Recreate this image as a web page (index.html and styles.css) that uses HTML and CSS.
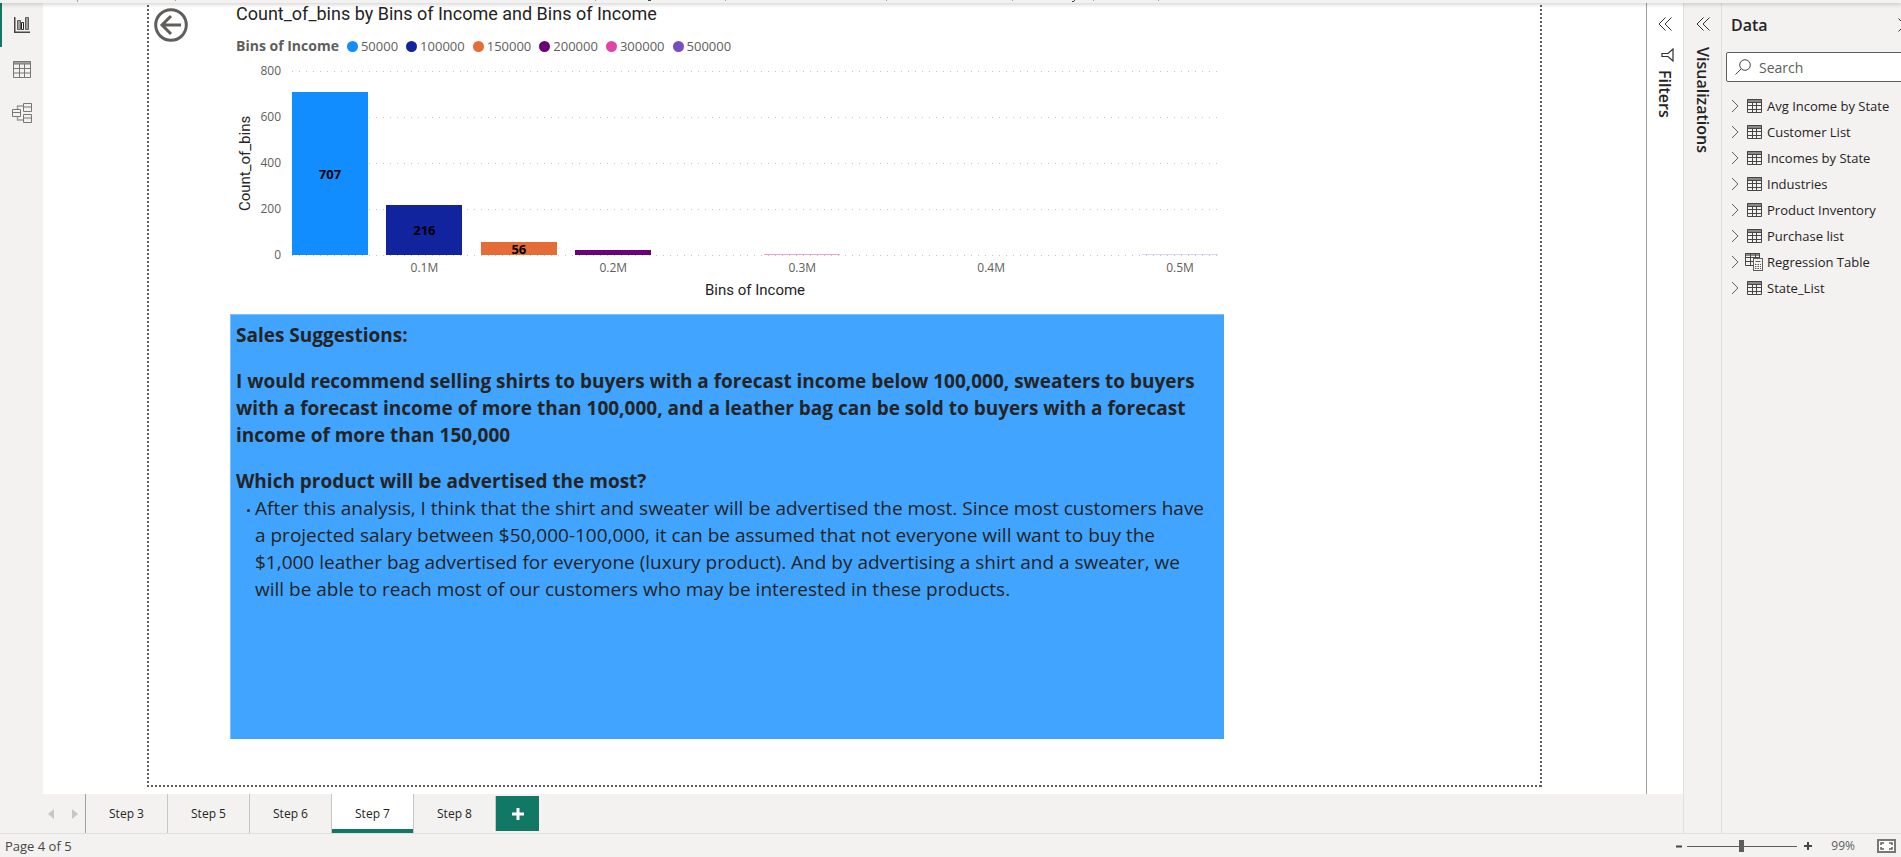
FILE: index.html
```html
<!DOCTYPE html>
<html lang="en">
<head>
<meta charset="utf-8">
<title>Report - Step 7</title>
<link rel="stylesheet" href="styles.css">
</head>
<body>
<svg class="defs" aria-hidden="true">
  <symbol id="table" viewBox="0 0 15 14">
    <rect x="0" y="0" width="15" height="3" fill="#8a8886"/>
    <path d="M.5.5h14v13H.5zM0 3.500h15M0 6.500h15M0 10.500h15M5.500 3v10M9.500 3v10" fill="none" stroke="#484644"/>
  </symbol>
  <symbol id="calc-table" viewBox="0 0 19 18">
    <rect x="0" y="0" width="15" height="3" fill="#8a8886"/>
    <path d="M.5.500h14v12H.5zM0 4.500h15M0 8.500h8M5.500 1v11M10.500 1v5" fill="none" stroke="#484644"/>
    <rect x="8.500" y="5.500" width="9" height="12" fill="#f3f2f1" stroke="#605e5c"/>
    <path d="M10.500 8.500h5M10 11.500h1.500m1 0H14m1 0h1M10 13.500h1.500m1 0H14m1 0h1M10 15.500h1.500m1 0H14m1 0h1" stroke="#605e5c"/>
  </symbol>
  <symbol id="chevron" viewBox="0 0 8 14"><path d="M1 1l6 6-6 6" fill="none" stroke="#605e5c"/></symbol>
  <symbol id="double" viewBox="0 0 14 14"><path d="M7.500.5L1 7l6.500 6.500M13.500.5L7 7l6.500 6.500" fill="none" stroke="#323130"/></symbol>
</svg>
<div class="app">
  <header class="ribbon">
    <svg width="1200" height="3" aria-hidden="true">
      <path d="M77.500 0v2M175.500 0v1M595.500 0v1M725.500 0v1M886.500 0v1M1012.500 0v1M1093.500 0v1M1158.500 0v1" stroke="#a19f9d"/>
      <path d="M648 .5h3M1072 1.500h2M1074 .5h1" stroke="#484644"/>
    </svg>
  </header>
  <div class="body">
    <nav class="rail" aria-label="Views">
      <button class="view current" aria-label="Report view">
        <svg width="16" height="16" viewBox="0 0 16 16"><path d="M.75 0v15.250H16" fill="none" stroke="#484644" stroke-width="1.500"/><path d="M3.500 3.500h3v9h-3zM11.500.5h3v12h-3z" fill="#a19f9d" stroke="#605e5c"/><path d="M7.500 5.500h2v7h-2z" fill="#fff" stroke="#252423"/></svg>
      </button>
      <button class="view" aria-label="Table view">
        <svg width="18" height="17" viewBox="0 0 18 17"><path d="M0 0h18v3H0z" fill="#a19f9d"/><path d="M.5.5h17v16H.5zM0 3h18M0 7.500h18M0 12h18M6.500 3v13M11.500 3v13" fill="none" stroke="#797775"/></svg>
      </button>
      <button class="view" aria-label="Model view">
        <svg width="20" height="20" viewBox="0 0 20 20"><path d="M5.500 6V3h6M5.500 14v3h6" fill="none" stroke="#a19f9d" stroke-width="1.500"/><g fill="#f3f2f1" stroke="#797775"><path d="M.5 6.500h8v7h-8zM11.500.5h8v8h-8zM11.500 11.500h8v8h-8z"/><path d="M0 9.500h9M11 4h9M11 15h9"/></g></svg>
      </button>
    </nav>
    <div class="center">
      <div class="stage">
        <main class="canvas">
          <div class="page">
            <button class="back" aria-label="Back">
              <svg width="34" height="34" viewBox="0 0 34 34" fill="none" stroke="#605e5c" stroke-width="3"><circle cx="17" cy="17" r="15.300"/><path d="M27 17H8M17 8l-9 9 9 9"/></svg>
            </button>
            <div class="visuals">
              <section class="chart">
                <h2>Count_of_bins by Bins of Income and Bins of Income</h2>
                <ul class="legend">
                  <li class="legend-title">Bins of Income</li>
                  <li><i class="c1"></i>50000</li><li><i class="c2"></i>100000</li><li><i class="c3"></i>150000</li><li><i class="c4"></i>200000</li><li><i class="c5"></i>300000</li><li><i class="c6"></i>500000</li>
                </ul>
                <div class="plot-row">
                  <div class="y-title">Count_of_bins</div>
                  <div class="y-axis"><span>800</span><span>600</span><span>400</span><span>200</span><span>0</span></div>
                  <div class="plot">
                    <div class="grid"><hr><hr><hr><hr><hr></div>
                    <div class="bars">
                      <div class="bar c1" style="left:0%;height:88.400%">707</div>
                      <div class="bar c2" style="left:10.200%;height:27%">216</div>
                      <div class="bar c3" style="left:20.400%;height:7%">56</div>
                      <div class="bar c4" style="left:30.600%;height:2.500%"></div>
                      <div class="bar thin c5" style="left:51%;height:.5%"></div>
                      <div class="bar thin c6" style="left:91.800%;height:.5%"></div>
                    </div>
                  </div>
                </div>
                <div class="x-axis">
                  <span style="left:14.300%">0.1M</span><span style="left:34.700%">0.2M</span><span style="left:55.100%">0.3M</span><span style="left:75.500%">0.4M</span><span style="left:95.900%">0.5M</span>
                </div>
                <div class="x-title">Bins of Income</div>
              </section>
              <section class="note">
                <p><b>Sales Suggestions:</b></p>
                <p class="gap"><b>I would recommend selling shirts to buyers with a forecast income below 100,000, sweaters to buyers<br>with a forecast income of more than 100,000, and a leather bag can be sold to buyers with a forecast<br>income of more than 150,000</b></p>
                <p class="gap"><b>Which product will be advertised the most?</b></p>
                <ul><li>After this analysis, I think that the shirt and sweater will be advertised the most. Since most customers have<br>a projected salary between $50,000-100,000, it can be assumed that not everyone will want to buy the<br>$1,000 leather bag advertised for everyone (luxury product). And by advertising a shirt and a sweater, we<br>will be able to reach most of our customers who may be interested in these products.</li></ul>
              </section>
            </div>
          </div>
        </main>
        <aside class="filters">
          <button aria-label="Expand filters"><svg width="14" height="14"><use href="#double"/></svg></button>
          <svg class="funnel" width="13" height="14" viewBox="0 0 13 14"><path d="M12 1v12L7 8.500H1v-3h6z" fill="none" stroke="#323130" stroke-width="1.200"/></svg>
          <h3>Filters</h3>
        </aside>
      </div>
      <nav class="tabs" aria-label="Pages">
        <div class="arrows">
          <button aria-label="Previous page"><svg width="6" height="10"><path d="M6 0v10L0 5z" fill="#c8c6c4"/></svg></button>
          <button aria-label="Next page"><svg width="6" height="10"><path d="M0 0v10l6-5z" fill="#c8c6c4"/></svg></button>
        </div>
        <button class="tab">Step 3</button>
        <button class="tab">Step 5</button>
        <button class="tab">Step 6</button>
        <button class="tab active">Step 7</button>
        <button class="tab">Step 8</button>
        <button class="add" aria-label="New page"><svg width="12" height="12"><path d="M6 0v12M0 6h12" stroke="#fff" stroke-width="3"/></svg></button>
      </nav>
    </div>
    <aside class="viz">
      <button aria-label="Expand visualizations"><svg width="14" height="14"><use href="#double"/></svg></button>
      <h3>Visualizations</h3>
    </aside>
    <aside class="data">
      <div class="data-head"><h3>Data</h3><button aria-label="Collapse data"><svg width="14" height="14"><path d="M.5.5L7 7 .5 13.500M7 .5L13.500 7 7 13.500" fill="none" stroke="#323130"/></svg></button></div>
      <label class="search">
        <svg width="16" height="16" viewBox="0 0 16 16"><path d="M.5 15.500L6 10" stroke="#484644"/><circle cx="10" cy="6" r="5.300" fill="none" stroke="#484644"/></svg>
        <input type="text" placeholder="Search" aria-label="Search">
      </label>
      <ul class="tree">
        <li><svg width="8" height="14"><use href="#chevron"/></svg><svg class="ico" width="19" height="14"><use href="#table"/></svg>Avg Income by State</li>
        <li><svg width="8" height="14"><use href="#chevron"/></svg><svg class="ico" width="19" height="14"><use href="#table"/></svg>Customer List</li>
        <li><svg width="8" height="14"><use href="#chevron"/></svg><svg class="ico" width="19" height="14"><use href="#table"/></svg>Incomes by State</li>
        <li><svg width="8" height="14"><use href="#chevron"/></svg><svg class="ico" width="19" height="14"><use href="#table"/></svg>Industries</li>
        <li><svg width="8" height="14"><use href="#chevron"/></svg><svg class="ico" width="19" height="14"><use href="#table"/></svg>Product Inventory</li>
        <li><svg width="8" height="14"><use href="#chevron"/></svg><svg class="ico" width="19" height="14"><use href="#table"/></svg>Purchase list</li>
        <li><svg width="8" height="14"><use href="#chevron"/></svg><svg class="ico" width="19" height="18"><use href="#calc-table"/></svg>Regression Table</li>
        <li><svg width="8" height="14"><use href="#chevron"/></svg><svg class="ico" width="19" height="14"><use href="#table"/></svg>State_List</li>
      </ul>
    </aside>
  </div>
  <footer class="status">
    <span class="page-count">Page 4 of 5</span>
    <div class="zoom">
      <button aria-label="Zoom out"><svg width="6" height="10"><path d="M0 5.500h6" stroke="#484644" stroke-width="2"/></svg></button>
      <input type="range" min="0" max="200" value="99" aria-label="Zoom">
      <button aria-label="Zoom in"><svg width="10" height="10"><path d="M5 1v8M1 5h8" stroke="#484644" stroke-width="2"/></svg></button>
      <output>99%</output>
      <button class="fit" aria-label="Fit to page"><svg width="19" height="14" viewBox="0 0 19 14"><path d="M1 1h17v12H1z" fill="#fff" stroke="#797775" stroke-width="2"/><path d="M4 6V4h3M12 4h3v2M15 8v2h-3M7 10H4V8" fill="none" stroke="#605e5c" stroke-width="1.500"/></svg></button>
    </div>
  </footer>
</div>
</body>
</html>
```
FILE: styles.css
```css
* { box-sizing: border-box; }
body { margin: 0; font-family: "Open Sans", "Noto Sans", sans-serif; font-size: 12px; color: #252423; background: #f3f2f1; }
h2, h3, p, ul { margin: 0; padding: 0; }
ul { list-style: none; }
button { display: flex; align-items: center; justify-content: center; padding: 0; border: 0; background: none; font: inherit; color: inherit; }
svg { display: block; flex: none; }
.defs { position: absolute; width: 0; height: 0; }

.app { display: flex; flex-direction: column; height: 100vh; overflow: hidden; }
.ribbon { position: relative; z-index: 1; flex: none; height: 3px; background: #f3f2f1; box-shadow: 0 1px 4px rgba(0, 0, 0, .25); }
.body { display: flex; flex: 1; min-height: 0; }

.rail { flex: none; width: 43px; }
.view { width: 100%; height: 44px; padding-right: 2px; border-left: 2px solid transparent; }
.view.current { border-left-color: #117865; }

.center { display: flex; flex: 1; flex-direction: column; min-width: 0; }
.stage { display: flex; flex: 1; min-height: 0; background: #fff; }
.canvas { display: flex; flex: 1; padding: 0 104px 7px; }
.page {
  display: flex; flex: 1; padding: 5px 318px 48px 6px;
  background:
    repeating-linear-gradient(#605e5c 0 2px, transparent 2px 4px) 0 2px / 2px 100% no-repeat,
    repeating-linear-gradient(#605e5c 0 2px, transparent 2px 4px) 100% 2px / 2px 100% no-repeat,
    repeating-linear-gradient(90deg, #605e5c 0 2px, transparent 2px 4px) 0 100% / 100% 2px no-repeat;
}
.back { flex: none; width: 36px; height: 34px; }
.visuals { display: flex; flex: 1; flex-direction: column; margin-left: 41px; }

.chart { padding: 0 6px; }
.chart h2 { font: 400 18px/20px Roboto, sans-serif; margin-top: -4px; }
.legend { display: flex; gap: 8px; align-items: center; margin-top: 12px; font-size: 13px; line-height: 20px; color: #605e5c; }
.legend li { display: flex; align-items: center; gap: 3px; }
.legend .legend-title { font-size: 14px; font-weight: 700; }
.legend i { width: 11px; height: 11px; border-radius: 50%; }
.c1 { background: #118dff; }
.c2 { background: #12239e; }
.c3 { background: #e66c37; }
.c4 { background: #6b007b; }
.c5 { background: #e044a7; }
.c6 { background: #744ec2; }
.plot-row { display: flex; height: 184px; margin-top: 15px; }
.y-title { width: 18px; writing-mode: vertical-rl; transform: rotate(180deg); text-align: center; font: 400 15px/18px Roboto, sans-serif; }
.y-axis { display: flex; flex-direction: column; justify-content: space-between; width: 27px; margin: -9px 11px -9px 0; text-align: right; line-height: 18px; font-size: 12px; color: #605e5c; }
.plot { position: relative; flex: 1; }
.grid { display: flex; flex-direction: column; justify-content: space-between; height: 185px; }
.grid hr { width: 100%; height: 1px; margin: 0; border: 0; background: repeating-linear-gradient(90deg, #c8c6c4 0 1px, transparent 1px 7px); }
.bars { position: absolute; inset: 0; }
.bar { position: absolute; bottom: 0; display: flex; align-items: center; justify-content: center; width: 8.2%; font-size: 13px; font-weight: 700; line-height: 12px; color: #000; }
.thin { min-height: 1px; opacity: .5; }
.thin.c6 { opacity: .25; }
.x-axis { position: relative; height: 14px; margin: 6px 0 0 56px; color: #605e5c; line-height: 14px; }
.x-axis span { position: absolute; transform: translateX(-50%); }
.x-title { margin: 6px 0 0 56px; text-align: center; font: 400 15px/18px Roboto, sans-serif; }

.note { flex: 1; margin-top: 15px; padding: 7px 5px; border: solid #80bfff; border-width: 1px 0 0 1px; background: #41a4ff; font-size: 19px; line-height: 27px; white-space: nowrap; }
.note .gap { margin-top: 19px; }
.note li { position: relative; padding-left: 19px; }
.note li::before { content: ""; position: absolute; top: 14px; left: 11px; width: 3px; height: 3px; border-radius: 50%; background: #252423; }

.filters { display: flex; flex-direction: column; align-items: center; flex: none; width: 37px; padding-top: 14px; border-left: 1px solid #a19f9d; }
.filters h3, .viz h3 { writing-mode: vertical-rl; font: 600 16px/22px "Open Sans", sans-serif; }
.funnel { margin: 17px 0 8px 4px; }
.viz { display: flex; flex-direction: column; align-items: center; flex: none; width: 38px; padding-top: 14px; border-left: 1px solid #e1dfdd; }
.viz h3 { margin-top: 16px; }

.data { flex: none; width: 180px; border-left: 1px solid #e1dfdd; overflow: hidden; }
.data-head { display: flex; align-items: center; justify-content: space-between; height: 44px; padding-left: 9px; margin-right: -11px; }
.data-head h3 { font: 600 16px/22px "Open Sans", sans-serif; }
.search { display: flex; align-items: center; gap: 8px; height: 30px; margin: 5px -10px 11px 4px; padding-left: 8px; border: 1px solid #605e5c; border-radius: 2px; background: #fff; }
.search input { flex: 1; min-width: 0; padding: 2px 0 0; border: 0; outline: 0; font: 400 14px/22px "Open Sans", sans-serif; background: none; }
.search input::placeholder { color: #605e5c; opacity: 1; }
.tree li { display: flex; align-items: center; height: 26px; padding-left: 9px; font-size: 13px; white-space: nowrap; }
.tree .ico { margin: 0 3px 0 6px; }

.tabs { display: flex; flex: none; height: 39px; }
.arrows { display: flex; justify-content: space-between; align-items: center; width: 42px; padding: 0 7px 0 5px; }
.tab { width: 82px; border-left: 1px solid #c8c6c4; color: #252423; }
.arrows + .tab { border-left-color: #a19f9d; }
.tab.active { background: #fff; box-shadow: inset 0 -4px #117865; }
.add { width: 44px; margin: 2px 0; border-left: 1px solid #c8c6c4; background: #117865; }

.status { display: flex; align-items: center; justify-content: space-between; flex: none; height: 24px; padding: 1px 5px 0; border-top: 1px solid #e1dfdd; line-height: 20px; color: #484644; }
.page-count { font-size: 13px; }
.zoom { display: flex; align-items: center; }
.zoom input { appearance: none; width: 110px; height: 12px; margin: 0 6px 0 5px; background: linear-gradient(#605e5c, #605e5c) center / 100% 1px no-repeat; }
.zoom input::-webkit-slider-thumb { appearance: none; width: 5px; height: 12px; background: #605e5c; }
.zoom output { margin: 0 22px 0 18px; color: #605e5c; }
```
